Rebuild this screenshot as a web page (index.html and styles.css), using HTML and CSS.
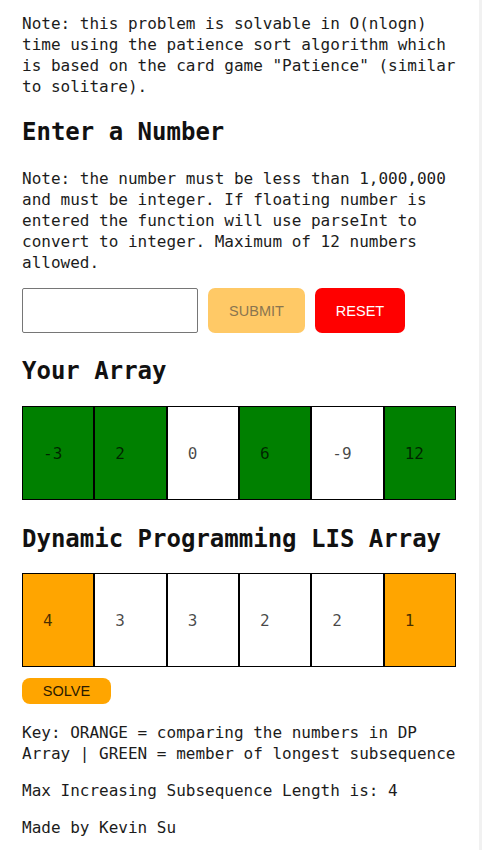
FILE: index.html
```html
<!DOCTYPE html>
<html lang="en">
<head>
<meta charset="utf-8">
<title>Longest Increasing Subsequence</title>
<link rel="stylesheet" href="styles.css">
</head>
<body>
<main class="page">
  <p class="text note-top">Note: this problem is solvable in O(nlogn) time using the patience sort algorithm which is based on the card game "Patience" (similar to solitare).</p>
  <h2 class="title title-enter">Enter a Number</h2>
  <p class="text note-input">Note: the number must be less than 1,000,000 and must be integer. If floating number is entered the function will use parseInt to convert to integer. Maximum of 12 numbers allowed.</p>
  <div class="controls">
    <input class="num-input" type="text">
    <button class="btn btn-submit">SUBMIT</button>
    <button class="btn btn-reset">RESET</button>
  </div>
  <h2 class="title title-array">Your Array</h2>
  <div class="cells cells-array">
    <div class="cell green">-3</div>
    <div class="cell green">2</div>
    <div class="cell">0</div>
    <div class="cell green">6</div>
    <div class="cell">-9</div>
    <div class="cell green">12</div>
  </div>
  <h2 class="title title-dp">Dynamic Programming LIS Array</h2>
  <div class="cells cells-dp">
    <div class="cell orange">4</div>
    <div class="cell">3</div>
    <div class="cell">3</div>
    <div class="cell">2</div>
    <div class="cell">2</div>
    <div class="cell orange">1</div>
  </div>
  <button class="btn btn-solve">SOLVE</button>
  <p class="text key">Key: ORANGE = comparing the numbers in DP Array | GREEN = member of longest subsequence</p>
  <p class="text result">Max Increasing Subsequence Length is: 4</p>
  <p class="text credit">Made by Kevin Su</p>
</main>
</body>
</html>
```

FILE: styles.css
```css
html {
  background: #f1f1f1;
  margin: 0;
  padding: 0;
}

body {
  margin: 0;
  width: 479px;
  min-height: 850px;
  background: #ffffff;
  font-family: "DejaVu Sans Mono", "Liberation Mono", monospace;
  color: #1c1c1c;
}

.page {
  padding: 0 0 0 22px;
  width: 440px;
  display: flex;
  flex-direction: column;
  align-items: flex-start;
}

.text {
  font-size: 16px;
  line-height: 21px;
  margin: 0;
}

.note-top { margin-top: 13px; }

.title {
  font-size: 24px;
  line-height: 30px;
  font-weight: bold;
  margin: 0;
  color: #111;
}

.title-enter { margin-top: 20px; }
.note-input { margin-top: 21px; }

.controls {
  margin-top: 15px;
  display: flex;
  gap: 10px;
  height: 45px;
}

.num-input {
  width: 176px;
  height: 45px;
  box-sizing: border-box;
  border: 1px solid #767676;
  border-radius: 2px;
  margin: 0;
  padding: 0 6px;
  font-size: 16px;
}

.btn {
  font-family: "Liberation Sans", Arial, sans-serif;
  font-size: 14.5px;
  border: none;
  margin: 0;
  padding: 0;
  cursor: pointer;
}

.btn-submit {
  width: 97px;
  height: 45px;
  border-radius: 7px;
  background: #ffc966;
  color: #8a7550;
}

.btn-reset {
  width: 90px;
  height: 45px;
  border-radius: 7px;
  background: #ff0000;
  color: #ffffff;
}

.title-array { margin-top: 23px; }

.cells {
  display: flex;
  width: 434px;
  margin-top: 20px;
}

.cells-dp { margin-top: 19px; }

.cell {
  flex: 1;
  height: 94px;
  box-sizing: border-box;
  border: 1px solid #000;
  padding-left: 20px;
  display: flex;
  align-items: center;
  font-size: 16px;
  color: rgba(0, 0, 0, 0.72);
  background: #ffffff;
}

.cell.green { background: #008000; }
.cell.orange { background: #ffa500; }

.title-dp { margin-top: 24px; }

.btn-solve {
  margin-top: 11px;
  width: 89px;
  height: 26px;
  border-radius: 8px;
  background: #ffa500;
  color: #2a1a00;
}

.key { margin-top: 18px; }
.result { margin-top: 16px; }
.credit { margin-top: 16px; }
```
